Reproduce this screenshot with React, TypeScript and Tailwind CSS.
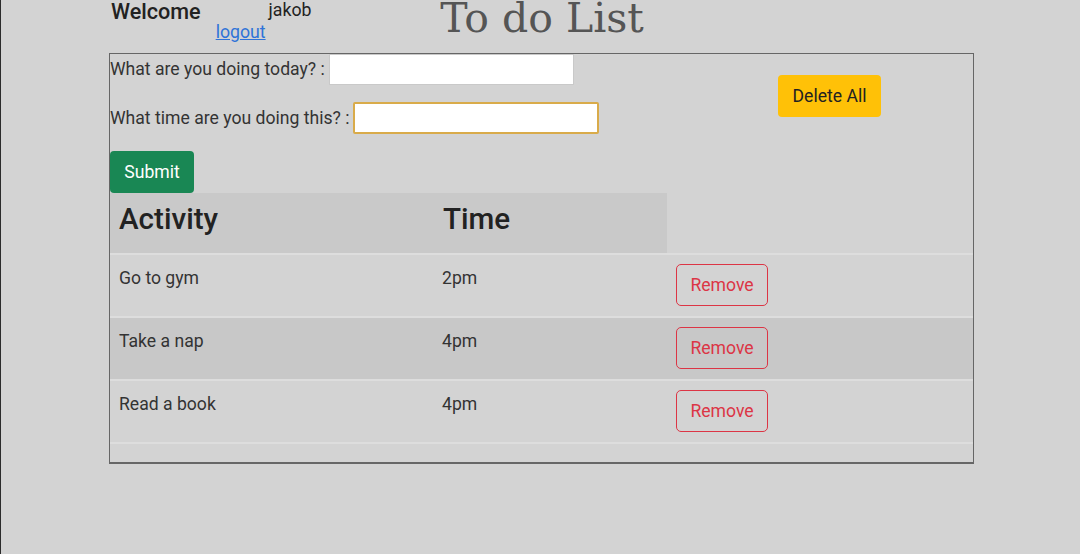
import { useState } from "react";

type Todo = { id: number; activity: string; time: string };

const initialTodos: Todo[] = [
  { id: 1, activity: "Go to gym", time: "2pm" },
  { id: 2, activity: "Take a nap", time: "4pm" },
  { id: 3, activity: "Read a book", time: "4pm" },
];

export default function App() {
  const [todos, setTodos] = useState<Todo[]>(initialTodos);
  const [activity, setActivity] = useState("");
  const [time, setTime] = useState("");

  const handleSubmit = (e: React.FormEvent) => {
    e.preventDefault();
    if (!activity) return;
    setTodos([...todos, { id: Date.now(), activity, time }]);
    setActivity("");
    setTime("");
  };

  return (
    <div className="w-[1080px] h-[554px] overflow-hidden bg-[#d3d3d3] border-l border-[#2b2b2b] font-['Roboto',sans-serif] text-[#333]">
      {/* Header */}
      <div className="grid grid-cols-[1fr_auto_1fr] h-[53px]">
        <div className="flex items-start pl-[110px]">
          <span className="text-[21.6px] font-medium leading-[24px] text-[#222]">Welcome</span>
          <a href="#" className="ml-[15px] mt-[22px] text-[17.7px] leading-[20px] text-[#2f73d8] underline">
            logout
          </a>
          <span className="ml-[3px] text-[17.7px] leading-[20px] text-[#222]">jakob</span>
        </div>
        <h1 className="-mt-[2px] ml-[3px] font-['DejaVu_Serif',serif] text-[41px] leading-[41px] text-[#555]">To do List</h1>
        <div />
      </div>

      {/* Main box */}
      <div className="ml-[108px] w-[865px] h-[411px] border border-b-2 border-[#666] flex flex-col">
        <div className="flex">
          <form onSubmit={handleSubmit} className="flex flex-col items-start">
            <div className="flex items-center h-[31px]">
              <label className="text-[17.6px]">What are you doing today? :</label>
              <input
                value={activity}
                onChange={(e) => setActivity(e.target.value)}
                className="ml-[4px] w-[245px] h-[31px] bg-white border border-[#c9c9c9] outline-none"
              />
            </div>
            <div className="flex items-center mt-[17px]">
              <label className="text-[17.6px]">What time are you doing this? :</label>
              <input
                value={time}
                onChange={(e) => setTime(e.target.value)}
                className="ml-[4px] w-[246px] h-[32px] bg-white border-2 border-[#d9ab4a] rounded-[2px] outline-none"
              />
            </div>
            <button
              type="submit"
              className="mt-[17px] w-[84px] h-[42px] rounded-[4px] bg-[#198754] text-white text-[17.6px]"
            >
              Submit
            </button>
          </form>
          <button
            onClick={() => setTodos([])}
            className="ml-auto mt-[21px] mr-[92px] w-[103px] h-[42px] rounded-[4px] bg-[#ffc107] text-[#222] text-[17.6px]"
          >
            Delete All
          </button>
        </div>

        {/* Table */}
        <div className="flex flex-col flex-1">
          <div className="grid grid-cols-[324px_233px_1fr] h-[60px]">
            <div className="bg-[#c9c9c9] pl-[9px] pt-[11px] text-[29.6px] leading-[30px] font-medium text-[#222]">
              Activity
            </div>
            <div className="bg-[#c9c9c9] pl-[9px] pt-[11px] text-[29.6px] leading-[30px] font-medium text-[#222]">
              Time
            </div>
            <div />
          </div>
          {todos.map((t, i) => (
            <div
              key={t.id}
              className={
                "grid grid-cols-[324px_233px_1fr] h-[63px] border-t-2 border-[#dddddd] " +
                (i % 2 === 1 ? "bg-[#c8c8c8]" : "")
              }
            >
              <div className="pl-[9px] pt-[11px] text-[17.6px] leading-[25px]">{t.activity}</div>
              <div className="pl-[8px] pt-[11px] text-[17.6px] leading-[25px]">{t.time}</div>
              <div className="pl-[9px] pt-[9px]">
                <button
                  onClick={() => setTodos(todos.filter((x) => x.id !== t.id))}
                  className="w-[92px] h-[42px] rounded-[5px] border border-[#dc3545] text-[#dc3545] text-[17.6px]"
                >
                  Remove
                </button>
              </div>
            </div>
          ))}
          <div className="border-t-2 border-[#dddddd]" />
        </div>
      </div>
    </div>
  );
}
